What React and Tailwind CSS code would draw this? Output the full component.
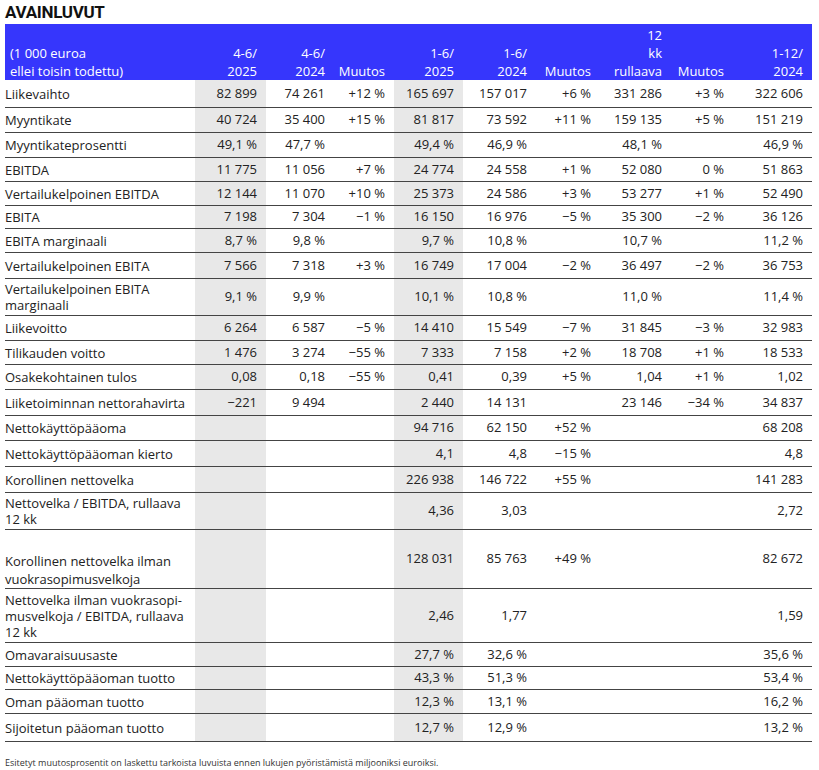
import React from "react";

const cols = "grid grid-cols-[190px_71px_68px_60px_69px_73px_64px_71px_62px_79px]";

const rows = [
  { label: "Liikevaihto", h: "h-[28px]", v: ["82 899", "74 261", "+12 %", "165 697", "157 017", "+6 %", "331 286", "+3 %", "322 606"] },
  { label: "Myyntikate", h: "h-[25px]", v: ["40 724", "35 400", "+15 %", "81 817", "73 592", "+11 %", "159 135", "+5 %", "151 219"] },
  { label: "Myyntikateprosentti", h: "h-[25px]", v: ["49,1 %", "47,7 %", "", "49,4 %", "46,9 %", "", "48,1 %", "", "46,9 %"] },
  { label: "EBITDA", h: "h-[24px]", v: ["11 775", "11 056", "+7 %", "24 774", "24 558", "+1 %", "52 080", "0 %", "51 863"] },
  { label: "Vertailukelpoinen EBITDA", h: "h-[24px]", v: ["12 144", "11 070", "+10 %", "25 373", "24 586", "+3 %", "53 277", "+1 %", "52 490"] },
  { label: "EBITA", h: "h-[23px]", v: ["7 198", "7 304", "−1 %", "16 150", "16 976", "−5 %", "35 300", "−2 %", "36 126"] },
  { label: "EBITA marginaali", h: "h-[24px]", v: ["8,7 %", "9,8 %", "", "9,7 %", "10,8 %", "", "10,7 %", "", "11,2 %"] },
  { label: "Vertailukelpoinen EBITA", h: "h-[26px]", v: ["7 566", "7 318", "+3 %", "16 749", "17 004", "−2 %", "36 497", "−2 %", "36 753"] },
  { label: "Vertailukelpoinen EBITA marginaali", h: "h-[37px]", v: ["9,1 %", "9,9 %", "", "10,1 %", "10,8 %", "", "11,0 %", "", "11,4 %"] },
  { label: "Liikevoitto", h: "h-[25px]", v: ["6 264", "6 587", "−5 %", "14 410", "15 549", "−7 %", "31 845", "−3 %", "32 983"] },
  { label: "Tilikauden voitto", h: "h-[24px]", v: ["1 476", "3 274", "−55 %", "7 333", "7 158", "+2 %", "18 708", "+1 %", "18 533"] },
  { label: "Osakekohtainen tulos", h: "h-[25px]", v: ["0,08", "0,18", "−55 %", "0,41", "0,39", "+5 %", "1,04", "+1 %", "1,02"] },
  { label: "Liiketoiminnan nettorahavirta", h: "h-[26px]", v: ["−221", "9 494", "", "2 440", "14 131", "", "23 146", "−34 %", "34 837"] },
  { label: "Nettokäyttöpääoma", h: "h-[25px]", v: ["", "", "", "94 716", "62 150", "+52 %", "", "", "68 208"] },
  { label: "Nettokäyttöpääoman kierto", h: "h-[26px]", v: ["", "", "", "4,1", "4,8", "−15 %", "", "", "4,8"] },
  { label: "Korollinen nettovelka", h: "h-[26px]", v: ["", "", "", "226 938", "146 722", "+55 %", "", "", "141 283"] },
  { label: "Nettovelka / EBITDA, rullaava 12 kk", h: "h-[37px]", v: ["", "", "", "4,36", "3,03", "", "", "", "2,72"] },
  { label: "Korollinen nettovelka ilman vuokrasopimusvelkoja", h: "h-[59px]", low: true, v: ["", "", "", "128 031", "85 763", "+49 %", "", "", "82 672"] },
  { label: "Nettovelka ilman vuokrasopi-musvelkoja / EBITDA, rullaava 12 kk", h: "h-[54px]", v: ["", "", "", "2,46", "1,77", "", "", "", "1,59"] },
  { label: "Omavaraisuusaste", h: "h-[24px]", v: ["", "", "", "27,7 %", "32,6 %", "", "", "", "35,6 %"] },
  { label: "Nettokäyttöpääoman tuotto", h: "h-[23px]", v: ["", "", "", "43,3 %", "51,3 %", "", "", "", "53,4 %"] },
  { label: "Oman pääoman tuotto", h: "h-[24px]", v: ["", "", "", "12,3 %", "13,1 %", "", "", "", "16,2 %"] },
  { label: "Sijoitetun pääoman tuotto", h: "h-[28px]", v: ["", "", "", "12,7 %", "12,9 %", "", "", "", "13,2 %"] },
];

const head = [
  ["4-6/", "2025"],
  ["4-6/", "2024"],
  ["Muutos"],
  ["1-6/", "2025"],
  ["1-6/", "2024"],
  ["Muutos"],
  ["12", "kk", "rullaava"],
  ["Muutos"],
  ["1-12/", "2024"],
];

const gray = (i) => i === 0 || i === 3;

export default function App() {
  return (
    <div className="w-[819px] h-[770px] bg-white px-[5px] pt-[1px] text-[#222] font-['Open_Sans',sans-serif]">
      <h1 className="text-[17px] leading-[23px] font-bold tracking-[-0.3px] text-[#111] font-['Roboto',sans-serif]">
        AVAINLUVUT
      </h1>

      <div className="w-[807px]">
        <div className={`${cols} h-[56px] bg-[#3636fc] text-white text-[13px] leading-[18px] font-medium`}>
          <div className="flex items-end pl-[5px]">
            <span>
              (1 000 euroa
              <br />
              ellei toisin todettu)
            </span>
          </div>
          {head.map((lines, i) => (
            <div key={i} className="flex flex-col items-end justify-end pr-[9px] text-right">
              {lines.map((l) => (
                <span key={l}>{l}</span>
              ))}
            </div>
          ))}
        </div>

        {rows.map((r) => (
          <div key={r.label} className={`${cols} ${r.h} border-b border-[#444] text-[13px]`}>
            <div
              className={`flex pr-2 ${r.low ? "items-end leading-[18px]" : "items-center leading-[16px]"}`}
            >
              <span>{r.label}</span>
            </div>
            {r.v.map((val, i) => (
              <div
                key={i}
                className={`flex items-center justify-end pr-[9px] whitespace-nowrap ${gray(i) ? "bg-[#e8e8e8]" : ""}`}
              >
                {val}
              </div>
            ))}
          </div>
        ))}
      </div>

      <p className="mt-[14px] text-[9px] text-[#333]">
        Esitetyt muutosprosentit on laskettu tarkoista luvuista ennen lukujen pyöristämistä miljooniksi euroiksi.
      </p>
    </div>
  );
}
